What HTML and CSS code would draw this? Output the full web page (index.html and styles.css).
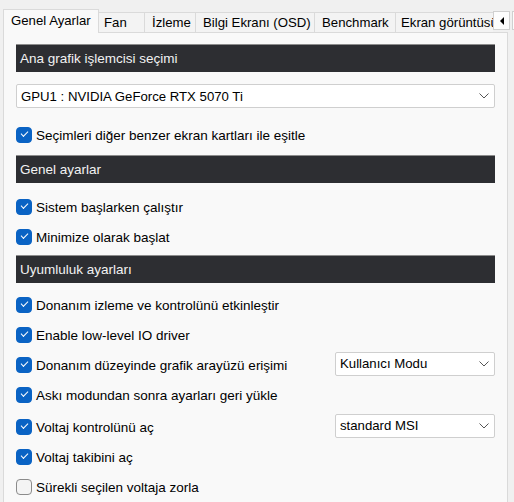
FILE: index.html
```html
<!DOCTYPE html>
<html lang="tr">
<head>
<meta charset="utf-8">
<title>Ayarlar</title>
<link rel="stylesheet" href="styles.css">
</head>
<body>
<div class="window">
  <div class="tabstrip">
    <div class="tablist">
      <div class="tab active t-general">Genel Ayarlar</div>
      <div class="tab t-fan">Fan</div>
      <div class="tab t-monitor">İzleme</div>
      <div class="tab t-osd">Bilgi Ekranı (OSD)</div>
      <div class="tab t-bench">Benchmark</div>
      <div class="tab t-shot">Ekran görüntüsü</div>
    </div>
    <div class="scroller">
      <div class="scroll-btn"><span class="arrow-left"></span></div>
      <div class="scroll-btn"><span class="arrow-right"></span></div>
    </div>
  </div>

  <div class="panel">
    <div class="section-head">Ana grafik işlemcisi seçimi</div>
    <div class="select select-wide">
      <span>GPU1 : NVIDIA GeForce RTX 5070 Ti</span>
      <svg class="chev" width="10" height="6" viewBox="0 0 10 6"><path d="M0.5 0.5 L5 5 L9.5 0.5" fill="none" stroke="#555" stroke-width="1"/></svg>
    </div>
    <div class="row row-sync"><span class="cb on"></span><span class="label">Seçimleri diğer benzer ekran kartları ile eşitle</span></div>

    <div class="section-head head-general">Genel ayarlar</div>
    <div class="row row-after-head2"><span class="cb on"></span><span class="label">Sistem başlarken çalıştır</span></div>
    <div class="row"><span class="cb on"></span><span class="label">Minimize olarak başlat</span></div>

    <div class="section-head head-compat">Uyumluluk ayarları</div>
    <div class="row row-after-head3"><span class="cb on"></span><span class="label">Donanım izleme ve kontrolünü etkinleştir</span></div>
    <div class="row"><span class="cb on"></span><span class="label">Enable low-level IO driver</span></div>
    <div class="row">
      <span class="cb on"></span><span class="label">Donanım düzeyinde grafik arayüzü erişimi</span>
      <div class="select select-side">
        <span>Kullanıcı Modu</span>
        <svg class="chev" width="10" height="6" viewBox="0 0 10 6"><path d="M0.5 0.5 L5 5 L9.5 0.5" fill="none" stroke="#555" stroke-width="1"/></svg>
      </div>
    </div>
    <div class="row"><span class="cb on"></span><span class="label">Askı modundan sonra ayarları geri yükle</span></div>
    <div class="row row-voltage">
      <span class="cb on"></span><span class="label">Voltaj kontrolünü aç</span>
      <div class="select select-side">
        <span>standard MSI</span>
        <svg class="chev" width="10" height="6" viewBox="0 0 10 6"><path d="M0.5 0.5 L5 5 L9.5 0.5" fill="none" stroke="#555" stroke-width="1"/></svg>
      </div>
    </div>
    <div class="row"><span class="cb on"></span><span class="label">Voltaj takibini aç</span></div>
    <div class="row"><span class="cb"></span><span class="label">Sürekli seçilen voltaja zorla</span></div>
  </div>
</div>
</body>
</html>
```

FILE: styles.css
```css
html, body {
  margin: 0;
  padding: 0;
  height: 100%;
  overflow: hidden;
}

body {
  background: #f0f0f0;
  font-family: "Liberation Sans", Arial, sans-serif;
  font-size: 13.5px;
  color: #000;
}

.window {
  width: 514px;
  height: 502px;
  display: flex;
  flex-direction: column;
}

/* ---- tab strip ---- */
.tabstrip {
  display: flex;
  align-items: flex-end;
  height: 33px;
  padding-left: 3px;
  position: relative;
  z-index: 1;
  overflow: hidden;
}

.tablist {
  display: flex;
  align-items: flex-end;
  width: 490px;
  flex: none;
  overflow: hidden;
  height: 33px;
}

.tab {
  flex: none;
  height: 20px;
  line-height: 19px;
  padding-left: 7px;
  margin-bottom: 1px;
  background: #f3f3f3;
  border: 1px solid #dadada;
  border-left: none;
  border-bottom: none;
  box-sizing: border-box;
  white-space: nowrap;
  font-size: 13.2px;
  overflow: hidden;
}

.tab.active {
  height: 24px;
  line-height: 21px;
  margin-bottom: 0;
  background: #f9f9f9;
  border: 1px solid #dadada;
  border-bottom: none;
}

.t-general { width: 96px; }
.t-fan { width: 46px; padding-left: 5px; }
.t-monitor { width: 51px; }
.t-osd { width: 119px; }
.t-bench { width: 81px; }
.t-shot { width: 110px; padding-left: 5px; }

.scroller {
  display: flex;
  gap: 2px;
  align-self: flex-start;
  margin-top: 11px;
  flex: none;
}

.scroll-btn {
  width: 17px;
  height: 19px;
  box-sizing: border-box;
  background: #fdfdfd;
  border: 1px solid #d0d0d0;
  display: flex;
  align-items: center;
  justify-content: center;
  flex: none;
}

.arrow-left {
  width: 0;
  height: 0;
  border-top: 4px solid transparent;
  border-bottom: 4px solid transparent;
  border-right: 4px solid #000;
}

.arrow-right {
  width: 0;
  height: 0;
  border-top: 4px solid transparent;
  border-bottom: 4px solid transparent;
  border-left: 4px solid #000;
}

/* ---- page body ---- */
.panel {
  flex: 1;
  margin-left: 3px;
  width: 505px;
  box-sizing: border-box;
  background: #f9f9f9;
  border: 1px solid #dadada;
  border-bottom: none;
  margin-top: -1px;
  padding: 11px 12px 0 12px;
  display: flex;
  flex-direction: column;
}

.section-head {
  height: 28px;
  box-sizing: border-box;
  background: #2d2e32;
  border-top: 1px solid #8c8c8c;
  color: #f2f2f2;
  font-size: 13.5px;
  line-height: 27px;
  padding-left: 4px;
  flex: none;
}

.head-general { margin-top: 5px; }
.head-compat { margin-top: 3px; }

.select {
  display: flex;
  align-items: center;
  justify-content: space-between;
  background: #fff;
  border: 1px solid #cfcfcf;
  border-radius: 2px;
  box-sizing: border-box;
  padding: 0 5px 0 4px;
  font-size: 13.2px;
}

.select-wide {
  margin-top: 12px;
  height: 24px;
}

.select-side {
  margin-left: auto;
  width: 160px;
  height: 24px;
  margin-bottom: 3px;
}

.chev { flex: none; }

.row {
  height: 30px;
  display: flex;
  align-items: center;
  flex: none;
}

.row-sync { margin-top: 12px; }
.row-after-head2 { margin-top: 9px; }
.row-after-head3 { margin-top: 7px; }
.row-voltage { margin-top: 2px; }

.label {
  margin-left: 4px;
  white-space: nowrap;
}

.cb {
  width: 16px;
  height: 16px;
  box-sizing: border-box;
  border-radius: 4px;
  border: 1px solid #8b8b8b;
  background: #f4f4f4;
  flex: none;
  position: relative;
}

.cb.on {
  background: #0a63c4;
  border-color: #0a63c4;
}

.cb.on::after {
  content: "";
  position: absolute;
  left: 4px;
  top: 3px;
  width: 6px;
  height: 3px;
  border-left: 1px solid #fff;
  border-bottom: 1px solid #fff;
  transform: rotate(-45deg);
}
```
